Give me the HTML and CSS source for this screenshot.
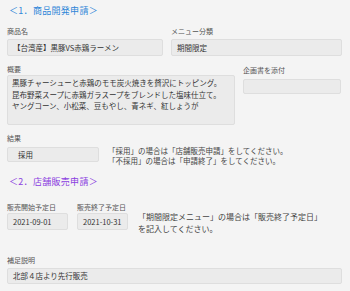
FILE: index.html
```html
<!DOCTYPE html>
<html lang="ja">
<head>
    <meta charset="UTF-8">
    <meta name="viewport" content="width=device-width, initial-scale=1.0">
    <title>店舗販売申請</title>
    <link rel="stylesheet" href="styles.css">
</head>
<body>
    <div class="page">
        <h2 class="section section-dev">＜1．商品開発申請＞</h2>

        <div class="row row-name">
            <div class="field field-name">
                <div class="label">商品名</div>
                <div class="box">【台湾産】黒豚VS赤鶏ラーメン</div>
            </div>
            <div class="field field-menu">
                <div class="label">メニュー分類</div>
                <div class="box">期間限定</div>
            </div>
        </div>

        <div class="row row-summary">
            <div class="field field-summary">
                <div class="label label-tight">概要</div>
                <div class="box textarea">黒豚チャーシューと赤鶏のモモ炭火焼きを贅沢にトッピング。<br>昆布野菜スープに赤鶏ガラスープをブレンドした塩味仕立て。<br>ヤングコーン、小松菜、豆もやし、青ネギ、紅しょうが</div>
            </div>
            <div class="field field-attach">
                <div class="label label-loose">企画書を添付</div>
                <div class="box attach"></div>
            </div>
        </div>

        <div class="row row-result">
            <div class="field field-result">
                <div class="label label-loose">結果</div>
                <div class="box result-box">採用</div>
            </div>
            <p class="note note-result">「採用」の場合は「店舗販売申請」をしてください。<br>「不採用」の場合は「申請終了」をしてください。</p>
        </div>

        <h2 class="section section-shop">＜2．店舗販売申請＞</h2>

        <div class="row row-dates">
            <div class="field field-date">
                <div class="label label-tight">販売開始予定日</div>
                <div class="box">2021-09-01</div>
            </div>
            <div class="field field-date">
                <div class="label label-tight">販売終了予定日</div>
                <div class="box">2021-10-31</div>
            </div>
            <p class="note note-dates">「期間限定メニュー」の場合は「販売終了予定日」<br>を記入してください。</p>
        </div>

        <div class="row row-extra">
            <div class="field field-extra">
                <div class="label">補足説明</div>
                <div class="box">北部４店より先行販売</div>
            </div>
        </div>
    </div>
</body>
</html>
```

FILE: styles.css
```css
body {
    margin: 0;
    background: #f4f4f4;
    color: #333;
    font-family: "Noto Sans CJK JP", "Noto Sans", sans-serif;
}
.page {
    padding: 5px 8px 0 7px;
}
.section {
    margin: 0;
    font-size: 9px;
    font-weight: normal;
    line-height: 12px;
    letter-spacing: 0.3px;
    padding-left: 2px;
}
.section-dev {
    color: #2f86d8;
}
.section-shop {
    color: #8b3ee0;
    margin-top: 10px;
}
.row {
    display: flex;
    align-items: flex-start;
}
.row-name {
    margin-top: 9px;
    gap: 8px;
}
.row-summary {
    margin-top: 8px;
    gap: 8px;
}
.row-result {
    margin-top: 8px;
    gap: 9px;
}
.row-dates {
    margin-top: 14px;
    gap: 9px;
}
.row-extra {
    margin-top: 20px;
}
.label {
    font-size: 7px;
    line-height: 10px;
    height: 10px;
    color: #555;
    margin-bottom: 3px;
}
.label-tight {
    margin-bottom: 1px;
}
.label-loose {
    margin-bottom: 4px;
}
.box {
    box-sizing: border-box;
    height: 17px;
    padding: 0 5px;
    background: #ebebeb;
    border: 1px solid #dedede;
    border-radius: 2px;
    font-size: 7.5px;
    line-height: 15px;
    color: #333;
    white-space: nowrap;
}
.field-name {
    width: 156px;
}
.field-menu {
    width: 171px;
}
.field-summary {
    width: 228px;
}
.textarea {
    height: 50px;
    padding: 1px 4px 0;
    line-height: 11.5px;
}
.field-attach {
    width: 98px;
    padding-top: 1px;
}
.attach {
    height: 15px;
    margin-top: 2px;
}
.field-result {
    width: 92px;
}
.result-box {
    height: 15px;
    line-height: 13px;
    padding-left: 10px;
}
.note {
    margin: 0;
    font-size: 7.5px;
    color: #444;
    white-space: nowrap;
}
.note-result {
    line-height: 10px;
    padding-top: 13px;
}
.field-date {
    width: 61px;
}
.row-dates .field-date + .field-date {
    width: 51px;
}
.note-dates {
    font-size: 8px;
    line-height: 12px;
    padding-top: 9px;
    margin-left: 1px;
}
.field-extra {
    width: 335px;
}
.field-extra .box {
    height: 16px;
    line-height: 14px;
}
```
